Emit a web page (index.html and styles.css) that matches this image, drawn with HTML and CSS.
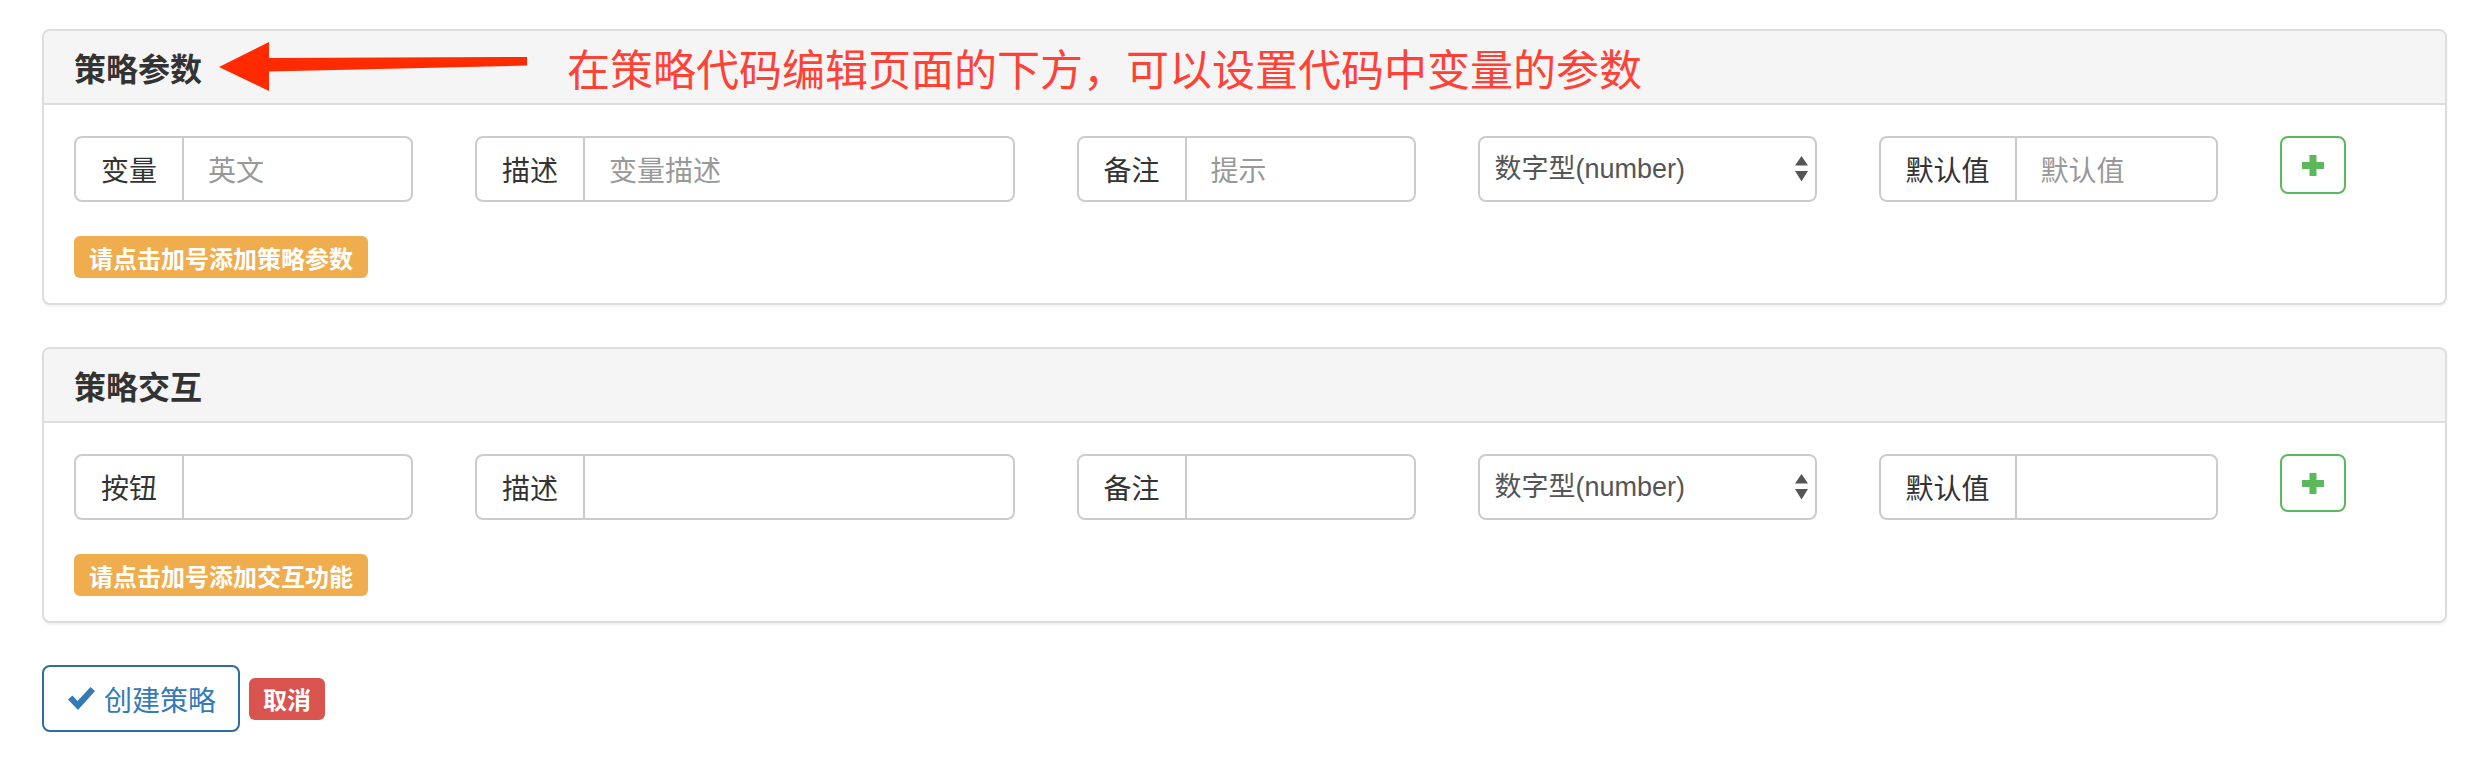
FILE: index.html
```html
<!DOCTYPE html>
<html lang="zh-CN">
<head>
<meta charset="utf-8">
<title>策略参数</title>
<link rel="stylesheet" href="styles.css">
</head>
<body>
<div class="page">
  <section class="panel">
    <div class="panel-heading">
      <h3 class="panel-title">策略参数</h3>
      <svg class="arrow" width="308" height="50" viewBox="0 0 308 50" aria-hidden="true">
        <path d="M0 25 L50 0 L50 16 L308 15 L308 23.5 L50 29.5 L50 49 Z" fill="#ff2a00"/>
      </svg>
      <span class="note">在策略代码编辑页面的下方，可以设置代码中变量的参数</span>
    </div>
    <div class="panel-body">
      <div class="row">
        <div class="input-group span-2"><span class="addon">变量</span><input class="field" type="text" placeholder="英文"></div>
        <div class="input-group span-3"><span class="addon">描述</span><input class="field" type="text" placeholder="变量描述"></div>
        <div class="input-group span-2"><span class="addon">备注</span><input class="field" type="text" placeholder="提示"></div>
        <div class="select-box span-2">
          <select class="select"><option>数字型(number)</option></select>
          <svg class="updown" width="13" height="26" viewBox="0 0 13 26" aria-hidden="true"><path d="M6.5 0 L13 9.5 L0 9.5 Z M0 15 L13 15 L6.5 25.5 Z" fill="#555"/></svg>
        </div>
        <div class="input-group span-2"><span class="addon">默认值</span><input class="field" type="text" placeholder="默认值"></div>
        <button class="btn-add" type="button" aria-label="添加">
          <svg width="22" height="21" viewBox="0 0 22 21" aria-hidden="true"><path d="M7.5 0 H14.5 V7 H22 V14 H14.5 V21 H7.5 V14 H0 V7 H7.5 Z" fill="#5cb85c"/></svg>
        </button>
      </div>
      <span class="tip">请点击加号添加策略参数</span>
    </div>
  </section>

  <section class="panel">
    <div class="panel-heading">
      <h3 class="panel-title">策略交互</h3>
    </div>
    <div class="panel-body">
      <div class="row">
        <div class="input-group span-2"><span class="addon">按钮</span><input class="field" type="text"></div>
        <div class="input-group span-3"><span class="addon">描述</span><input class="field" type="text"></div>
        <div class="input-group span-2"><span class="addon">备注</span><input class="field" type="text"></div>
        <div class="select-box span-2">
          <select class="select"><option>数字型(number)</option></select>
          <svg class="updown" width="13" height="26" viewBox="0 0 13 26" aria-hidden="true"><path d="M6.5 0 L13 9.5 L0 9.5 Z M0 15 L13 15 L6.5 25.5 Z" fill="#555"/></svg>
        </div>
        <div class="input-group span-2"><span class="addon">默认值</span><input class="field" type="text"></div>
        <button class="btn-add" type="button" aria-label="添加">
          <svg width="22" height="21" viewBox="0 0 22 21" aria-hidden="true"><path d="M7.5 0 H14.5 V7 H22 V14 H14.5 V21 H7.5 V14 H0 V7 H7.5 Z" fill="#5cb85c"/></svg>
        </button>
      </div>
      <span class="tip">请点击加号添加交互功能</span>
    </div>
  </section>

  <div class="actions">
    <button class="btn-create" type="button">
      <svg class="check" width="27" height="23" viewBox="0 0 27 23" aria-hidden="true"><path d="M0 12.5 L4.5 8.5 L9.5 14 L22.5 0 L27 4 L10 23 Z" fill="#337ab7"/></svg>
      <span>创建策略</span>
    </button>
    <span class="btn-cancel">取消</span>
  </div>
</div>
</body>
</html>
```

FILE: styles.css
```css
html, body {
  margin: 0;
  padding: 0;
  background: #ffffff;
}

body {
  font-family: "Liberation Sans", "Noto Sans CJK SC", sans-serif;
  color: #333333;
}

.page {
  padding: 29px 31px 0 42px;
}

.panel {
  border: 2px solid #dddddd;
  border-radius: 8px;
  background: #ffffff;
  box-shadow: 0 2px 2px rgba(0, 0, 0, 0.05);
  margin-bottom: 42px;
}

.panel-heading {
  display: flex;
  align-items: center;
  height: 72px;
  padding: 0 30px;
  background: #f5f5f5;
  border-bottom: 2px solid #dddddd;
  border-radius: 6px 6px 0 0;
}

.panel-title {
  margin: 0;
  font-family: "Noto Sans CJK SC", sans-serif;
  font-size: 32px;
  font-weight: 700;
  color: #333333;
  line-height: 1;
}

.arrow {
  display: block;
  margin-left: 17px;
  flex: none;
}

.note {
  margin-left: 40px;
  font-family: "Noto Sans CJK SC", sans-serif;
  font-size: 43px;
  font-weight: 400;
  color: #ff4136;
  line-height: 1;
  white-space: nowrap;
}

.panel-body {
  padding: 31px 27px 25px 30px;
}

.row {
  display: grid;
  grid-template-columns: repeat(12, 1fr);
  column-gap: 62px;
  align-items: start;
}

.span-2 { grid-column: span 2; }
.span-3 { grid-column: span 3; }

.input-group {
  display: flex;
  height: 66px;
  box-sizing: border-box;
  border: 2px solid #cccccc;
  border-radius: 8px;
  background: #ffffff;
  overflow: hidden;
}

.addon {
  display: flex;
  align-items: center;
  padding: 0 25px;
  border-right: 2px solid #cccccc;
  font-family: "Noto Sans CJK SC", sans-serif;
  font-size: 28px;
  color: #333333;
  white-space: nowrap;
}

.field {
  flex: 1;
  min-width: 0;
  border: none;
  outline: none;
  background: transparent;
  padding: 0 24px;
  font-family: "Noto Sans CJK SC", sans-serif;
  font-size: 28px;
  color: #555555;
}

.field::placeholder {
  color: #999999;
}

.select-box {
  display: flex;
  align-items: center;
  height: 66px;
  box-sizing: border-box;
  border: 2px solid #cccccc;
  border-radius: 8px;
  background: #ffffff;
  padding: 0 7px 0 15px;
}

.select {
  flex: 1;
  min-width: 0;
  appearance: none;
  -webkit-appearance: none;
  border: none;
  outline: none;
  background: transparent;
  padding: 0;
  font-family: "Liberation Sans", "Noto Sans CJK SC", sans-serif;
  font-size: 27px;
  color: #555555;
}

.updown {
  display: block;
  flex: none;
}

.btn-add {
  grid-column: span 1;
  justify-self: start;
  display: flex;
  align-items: center;
  justify-content: center;
  width: 66px;
  height: 58px;
  box-sizing: border-box;
  padding: 0;
  border: 2px solid #5cb85c;
  border-radius: 8px;
  background: #ffffff;
}

.btn-add svg {
  display: block;
}

.tip {
  display: flex;
  align-items: center;
  width: max-content;
  height: 42px;
  margin-top: 34px;
  padding: 0 15px;
  border-radius: 6px;
  background: #f0ad4e;
  color: #ffffff;
  font-family: "Noto Sans CJK SC", sans-serif;
  font-size: 24px;
  font-weight: 700;
}

.actions {
  display: flex;
  align-items: center;
}

.btn-create {
  display: flex;
  align-items: center;
  width: 198px;
  height: 67px;
  box-sizing: border-box;
  padding: 0 0 0 24px;
  border: 2px solid #2e6da4;
  border-radius: 8px;
  background: #ffffff;
  color: #337ab7;
  font-family: "Noto Sans CJK SC", sans-serif;
  font-size: 28px;
}

.check {
  display: block;
  margin-right: 9px;
  flex: none;
}

.btn-cancel {
  display: flex;
  align-items: center;
  height: 42px;
  margin-left: 9px;
  padding: 0 14px;
  border-radius: 6px;
  background: #d9534f;
  color: #ffffff;
  font-family: "Noto Sans CJK SC", sans-serif;
  font-size: 24px;
  font-weight: 700;
}
```
